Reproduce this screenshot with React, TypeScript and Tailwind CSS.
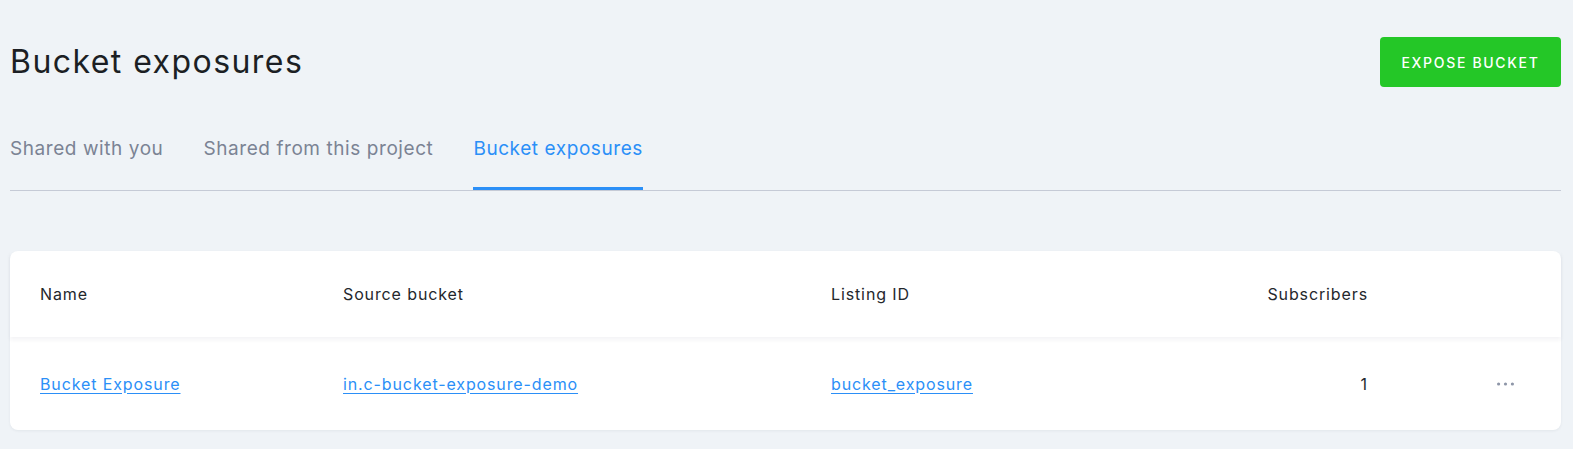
import React from "react";

const tabs = [
  { label: "Shared with you", active: false },
  { label: "Shared from this project", active: false },
  { label: "Bucket exposures", active: true },
];

function Dots() {
  return (
    <svg width="17" height="4" viewBox="0 0 17 4" fill="#8e96a8">
      <circle cx="1.6" cy="2" r="1.6" />
      <circle cx="8.5" cy="2" r="1.6" />
      <circle cx="15.4" cy="2" r="1.6" />
    </svg>
  );
}

export default function App() {
  return (
    <div
      className="min-h-screen overflow-hidden bg-[#eff3f7] pl-[10px] pr-[12px] pt-[37px]"
      style={{ fontFamily: "Inter, 'Noto Sans', sans-serif" }}
    >
      <div className="flex items-center justify-between">
        <h1 className="text-[32px] leading-[40px] font-normal tracking-[0.045em] text-[#1c1f24]">Bucket exposures</h1>
        <button className="h-[50px] w-[181px] rounded-[4px] bg-[#24c727] text-[14px] font-medium uppercase tracking-[0.12em] text-white">
          Expose bucket
        </button>
      </div>

      <div className="mt-[48px] flex gap-[40px] border-b border-[#c5cad6]">
        {tabs.map((t) => (
          <div
            key={t.label}
            className={`border-b-[3px] pb-[24px] text-[19px] leading-[28px] tracking-[0.03em] ${
              t.active ? "border-[#2b8ff7] text-[#2b8ff7]" : "border-transparent text-[#7b8394]"
            }`}
          >
            {t.label}
          </div>
        ))}
      </div>

      <div className="mt-[60px] rounded-[8px] bg-white shadow-[0_1px_3px_rgba(20,30,50,0.06)]">
        <div className="grid h-[86px] grid-cols-[303px_488px_1fr_162px_163px] items-center px-[30px] text-[16px] tracking-[0.055em] text-[#24272c] shadow-[0_3px_4px_rgba(30,45,70,0.05)]">
          <div>Name</div>
          <div>Source bucket</div>
          <div>Listing ID</div>
          <div className="text-right">Subscribers</div>
          <div />
        </div>
        <div className="grid h-[93px] grid-cols-[303px_488px_1fr_162px_163px] items-center px-[30px] text-[16px] tracking-[0.055em]">
          <div>
            <a className="text-[#2b8ff7] underline underline-offset-[3px]">Bucket Exposure</a>
          </div>
          <div>
            <a className="text-[#2b8ff7] underline underline-offset-[3px]">in.c-bucket-exposure-demo</a>
          </div>
          <div>
            <a className="text-[#2b8ff7] underline underline-offset-[3px]">bucket_exposure</a>
          </div>
          <div className="text-right text-[#24272c]">1</div>
          <div className="flex justify-end pr-[17px]">
            <Dots />
          </div>
        </div>
      </div>
    </div>
  );
}
